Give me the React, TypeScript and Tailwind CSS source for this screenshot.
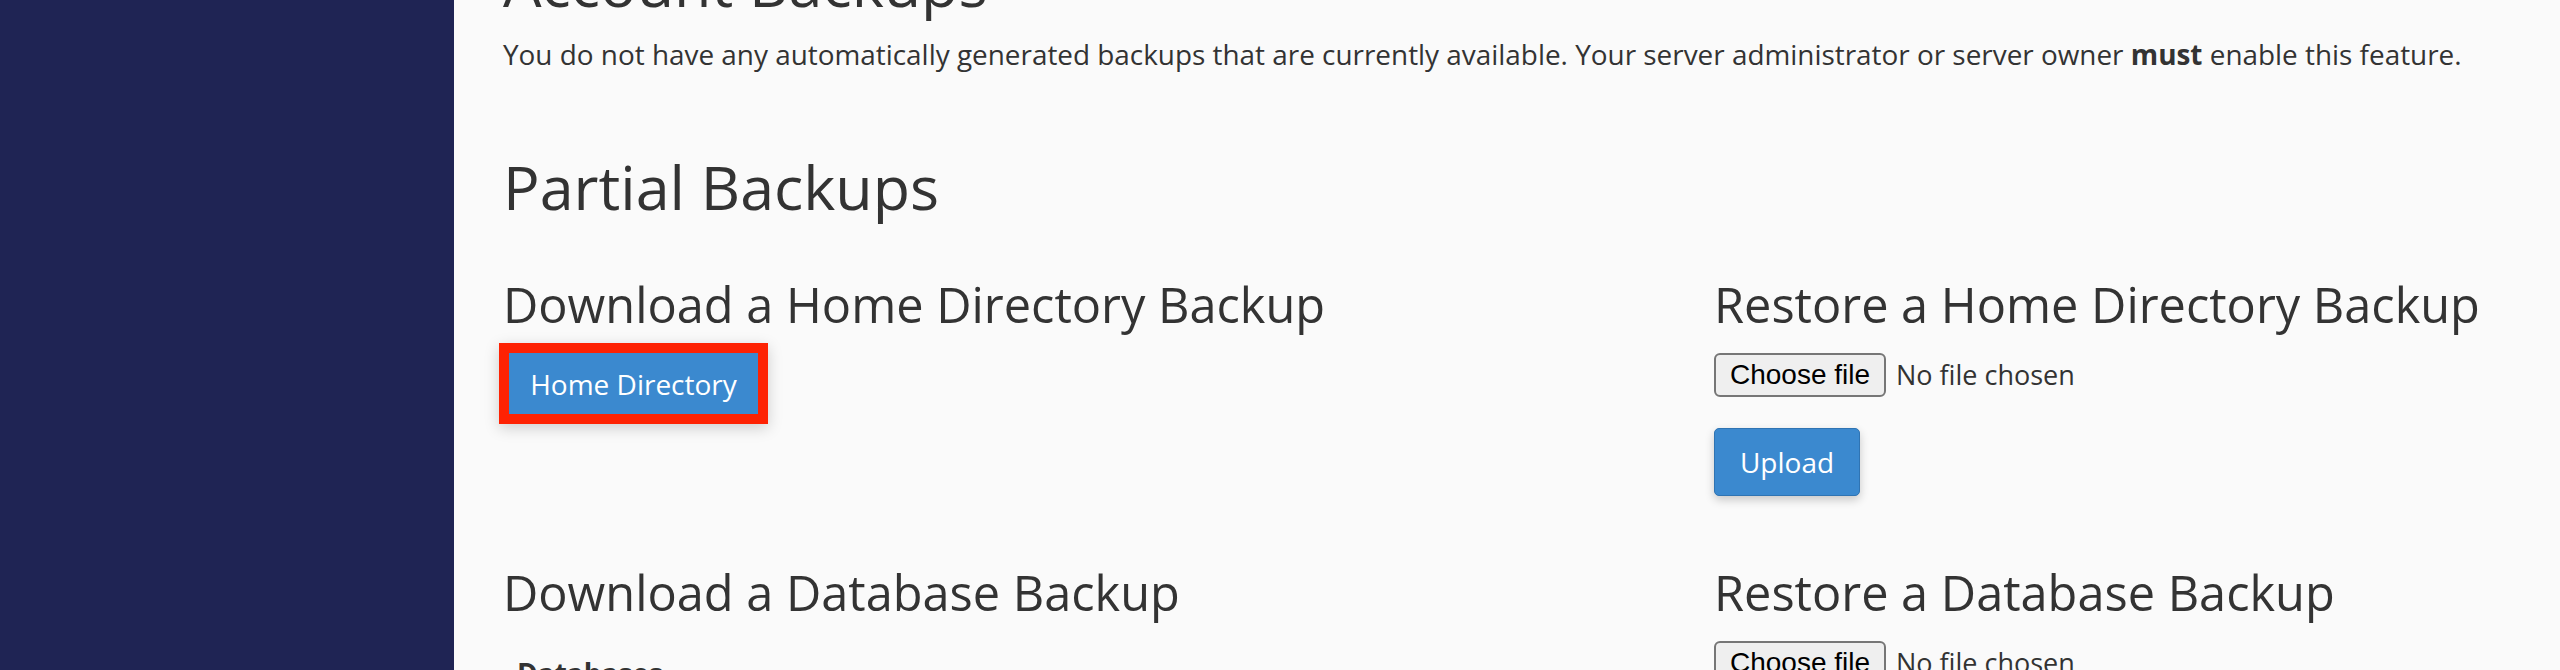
import React from 'react';

const FileField = () => (
  <div className="flex items-center">
    <span className="flex h-[44px] w-[172px] items-center justify-center rounded-[6px] border-2 border-[#767676] bg-[#efefef] font-['Liberation_Sans',Arial,sans-serif] text-[28px] leading-none text-black">
      Choose file
    </span>
    <span className="ml-[10px] text-[27px] leading-[40px] text-[#333]">No file chosen</span>
  </div>
);

const App = () => {
  return (
    <div className="flex h-[670px] overflow-hidden bg-[#fafafa] font-['Open_Sans',sans-serif] text-[#333]">
      <aside className="w-[454px] shrink-0 bg-[#1f2454]" />

      <main className="flex-1 pl-[49px] pr-[49px]">
        <h2 className="-mt-[49px] text-[61px] font-normal leading-[66px]">Account Backups</h2>
        <p className="mt-[17px] text-[27.9px] leading-[40px]">
          You do not have any automatically generated backups that are currently available. Your server administrator or server owner <strong className="font-bold">must</strong> enable this feature.
        </p>

        <h2 className="mt-[80px] text-[61px] font-normal leading-[66px]">Partial Backups</h2>

        <div className="mt-[58px] grid grid-cols-[1211px_1fr] gap-y-[70px]">
          {/* home directory download */}
          <section>
            <h3 className="text-[48.7px] font-normal leading-[53px]">Download a Home Directory Backup</h3>
            <div className="-ml-[4px] mt-[12px] inline-block border-[10px] border-[#fe2203] shadow-[0_4px_14px_rgba(0,0,0,0.18)]">
              <button className="flex h-[61px] w-[249px] items-center justify-center bg-[#3b89cf] text-[28px] leading-none text-white">
                Home Directory
              </button>
            </div>
          </section>

          {/* home directory restore */}
          <section>
            <h3 className="text-[48.7px] font-normal leading-[53px]">Restore a Home Directory Backup</h3>
            <div className="mt-[22px]">
              <FileField />
            </div>
            <button className="mt-[31px] flex h-[68px] w-[146px] items-center justify-center rounded-[5px] border border-[#2f74b3] bg-[#3b89cf] text-[28px] leading-none text-white shadow-[0_4px_10px_rgba(0,0,0,0.2)]">
              Upload
            </button>
          </section>

          {/* database download */}
          <section>
            <h3 className="text-[48.7px] font-normal leading-[53px]">Download a Database Backup</h3>
            <div className="mt-[34px] pl-[14px] text-[28px] font-bold leading-[40px]">Databases</div>
          </section>

          {/* database restore */}
          <section>
            <h3 className="text-[48.7px] font-normal leading-[53px]">Restore a Database Backup</h3>
            <div className="mt-[22px]">
              <FileField />
            </div>
          </section>
        </div>
      </main>
    </div>
  );
};

export default App;
